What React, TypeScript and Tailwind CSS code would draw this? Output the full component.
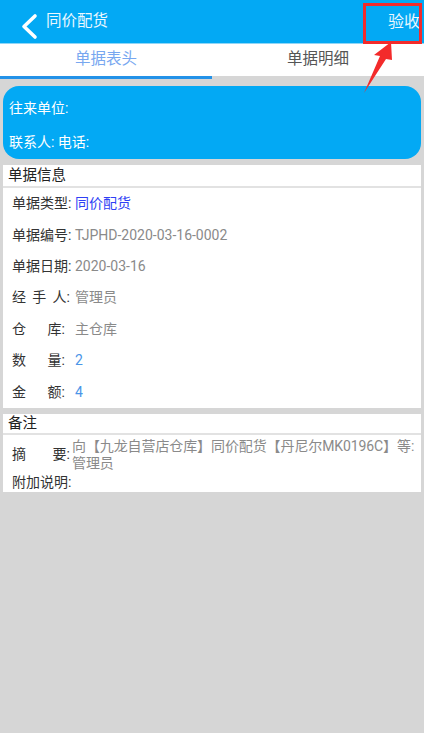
import React from "react";

const font = {
  fontFamily: "Roboto, 'Noto Sans CJK SC', 'Noto Sans', sans-serif",
};

type Row = { label: React.ReactNode; value: string; color: string };

function Spread({ parts, w }: { parts: string[]; w: string }) {
  return (
    <span className={`inline-flex justify-between ${w}`}>
      {parts.map((p) => (
        <span key={p}>{p}</span>
      ))}
    </span>
  );
}

const rows: Row[] = [
  { label: "单据类型:", value: "同价配货", color: "text-[#2f3ff5]" },
  { label: "单据编号:", value: "TJPHD-2020-03-16-0002", color: "text-[#8a8a8a]" },
  { label: "单据日期:", value: "2020-03-16", color: "text-[#8a8a8a]" },
  { label: <Spread parts={["经", "手", "人:"]} w="w-[58px]" />, value: "管理员", color: "text-[#8a8a8a]" },
  { label: <Spread parts={["仓", "库:"]} w="w-[53px]" />, value: "主仓库", color: "text-[#8a8a8a]" },
  { label: <Spread parts={["数", "量:"]} w="w-[53px]" />, value: "2", color: "text-[#4a95e8]" },
  { label: <Spread parts={["金", "额:"]} w="w-[53px]" />, value: "4", color: "text-[#4a95e8]" },
];

export default function App() {
  return (
    <div className="relative min-h-[733px] w-full bg-[#d6d6d6]" style={font}>
      {/* top bar */}
      <header className="flex h-[44px] items-center border-b border-[#8fd6f7] bg-[#03a9f4] text-[#eaf7ff]">
        <svg width="40" height="44" viewBox="0 0 40 44" className="ml-[4px]">
          <polyline
            points="31,16 20,26.5 31,37"
            fill="none"
            stroke="#ffffff"
            strokeWidth="3.6"
            strokeLinecap="round"
            strokeLinejoin="round"
          />
        </svg>
        <span className="ml-[2px] text-[15.5px]">同价配货</span>
        <span className="ml-auto mr-[4px] text-[16px]">验收</span>
      </header>

      {/* tabs */}
      <div className="flex h-[32px] bg-white text-[15.5px]">
        <div className="flex flex-1 items-center justify-center text-[#78a7f0]">单据表头</div>
        <div className="flex flex-1 items-center justify-center text-[#555555]">单据明细</div>
      </div>
      <div className="flex h-[3px]">
        <div className="w-1/2 bg-[#2392e8]" />
      </div>

      <main className="flex flex-col px-[3px] pt-[7px]">
        {/* contact card */}
        <div className="flex h-[73px] flex-col justify-between rounded-[16px] bg-[#03a9f4] px-[6px] pb-[7px] pt-[12px] text-[14px] text-white">
          <div className="leading-[20px]">往来单位:</div>
          <div className="leading-[20px]">联系人: 电话:</div>
        </div>

        {/* bill info */}
        <section className="mt-[6px] bg-white">
          <div className="h-[21px] px-[5px] text-[14.5px] leading-[21px] text-[#222222]">单据信息</div>
          <div className="h-[2px] bg-[#e2e2e2]" />
          <div className="flex flex-col px-[9px] text-[14px]">
            {rows.map((r, i) => (
              <div key={i} className="flex h-[31.4px] items-center">
                <span className="w-[63px] text-[#333333]">{r.label}</span>
                <span className={r.color}>{r.value}</span>
              </div>
            ))}
          </div>
        </section>

        {/* remarks */}
        <section className="mt-[6px] bg-white">
          <div className="h-[19px] px-[5px] text-[14.5px] leading-[19px] text-[#222222]">备注</div>
          <div className="h-[2px] bg-[#e2e2e2]" />
          <div className="flex flex-col pl-[9px] pr-[2px] pt-[3px] text-[14px]">
            <div className="flex items-center">
              <span className="w-[60px] shrink-0 text-[#333333]">
                <Spread parts={["摘", "要:"]} w="w-[58px]" />
              </span>
              <span className="leading-[17px] tracking-[-0.1px] text-[#8a8a8a]">
                向【九龙自营店仓库】同价配货【丹尼尔MK0196C】等:管理员
              </span>
            </div>
            <div className="leading-[20px] text-[#333333]">附加说明:</div>
          </div>
        </section>
      </main>

      {/* highlight annotation */}
      <div className="absolute left-[363px] top-[3px] h-[41px] w-[59px] border-[3px] border-[#f32b2b]" />
      <svg className="pointer-events-none absolute left-0 top-0" width="424" height="100" viewBox="0 0 424 100">
        <polygon points="391,42 374,55 380,56 364,93 386,59 392,60" fill="#f32b2b" />
      </svg>
    </div>
  );
}
